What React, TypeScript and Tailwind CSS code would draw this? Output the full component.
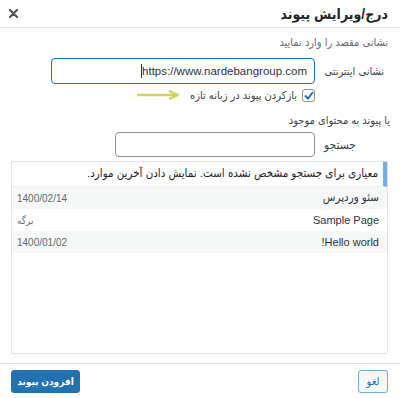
import React from 'react';

const font = "font-['Liberation_Sans','DejaVu_Sans_Condensed','DejaVu_Sans',sans-serif]";

const rows = [
  { title: 'سئو وردپرس', meta: '1400/02/14', latin: false, alt: true },
  { title: 'Sample Page', meta: 'برگه', latin: true, alt: false },
  { title: 'Hello world!', meta: '1400/01/02', latin: true, alt: true },
];

const CloseIcon = () => (
  <svg width="9" height="9" viewBox="0 0 9 9" className="block">
    <path d="M1 1 L8 8 M8 1 L1 8" stroke="#50575e" strokeWidth="2.2" strokeLinecap="round" />
  </svg>
);

const Arrow = () => (
  <svg width="44" height="10" viewBox="0 0 44 10" className="block">
    <path d="M1 5 H40" stroke="#c9d65a" strokeWidth="2.4" />
    <path d="M33 1 L42 5 L33 9" fill="none" stroke="#c9d65a" strokeWidth="2.4" strokeLinejoin="round" />
  </svg>
);

export default function App() {
  return (
    <div dir="rtl" className={`w-[400px] h-[398px] bg-white flex flex-col text-[#1d2327] whitespace-nowrap ${font}`}>
      {/* header */}
      <div className="h-[28px] flex items-center justify-between pr-[12px] pl-[9px] border-b border-[#e5e5e5]">
        <h1 className="text-[14px] font-bold leading-none">درج/ویرایش پیوند</h1>
        <CloseIcon />
      </div>

      {/* body */}
      <div className="flex-1 flex flex-col pr-[12px] pl-[11px]">
        <p className="mt-[5px] text-[11px] leading-[18px] text-[#646970]">نشانی مقصد را وارد نمایید</p>

        <div className="mt-[7px] flex items-center">
          <label className="w-[66px] shrink-0 pr-[4px] text-[11px] text-[#3c434a]">نشانی اینترنتی</label>
          <div className="mr-[7px] w-[264px] h-[26px] rounded-[4px] border-[1.5px] border-[#2271b1] flex items-center justify-start px-[7px]">
            <span dir="ltr" className="text-[11.5px] text-[#2c3338] leading-[14px] border-l border-[#2c3338]">https://www.nardebangroup.com</span>
          </div>
        </div>

        <div className="mt-[4px] h-[14px] flex items-center pr-[73px]">
          <span className="w-[13px] h-[13px] rounded-[3px] border border-[#8c8f94] flex items-center justify-center">
            <svg width="10" height="9" viewBox="0 0 10 9">
              <path d="M1 4.5 L4 7.5 L9 1" fill="none" stroke="#2271b1" strokeWidth="2" />
            </svg>
          </span>
          <span className="mr-[5px] text-[11px] text-[#3c434a]">بازکردن پیوند در زبانه تازه</span>
          <span className="mr-[10px]">
            <Arrow />
          </span>
        </div>

        <p className="mt-[9px] -mr-[2px] text-[11px] leading-[18px] text-[#3c434a]">یا پیوند به محتوای موجود</p>

        <div className="mt-[3px] flex items-center">
          <label className="w-[66px] shrink-0 pr-[32px] text-[12px] text-[#3c434a]">جستجو</label>
          <div className="mr-[7px] w-[200px] h-[25px] rounded-[4px] border border-[#8c8f94]" />
        </div>

        <div className="mt-[4px] h-[193px] border border-[#e5e5e5] flex flex-col">
          <div className="h-[25px] shrink-0 flex items-center pr-[5px] border-r-[4px] border-[#72aee6] border-b border-b-[#f0f0f1]">
            <span className="text-[11.5px] text-[#1d2327]">معیاری برای جستجو مشخص نشده است. نمایش دادن آخرین موارد.</span>
          </div>
          {rows.map((r) => (
            <div
              key={r.title}
              className={`h-[22px] shrink-0 flex items-center justify-between pr-[8px] pl-[5px] ${r.alt ? 'bg-[#f6f7f7]' : 'bg-white'}`}
            >
              <span dir={r.latin ? 'rtl' : undefined} className={`${r.latin ? 'text-[11px]' : 'text-[11.5px]'} text-[#2c3338]`}>
                {r.title}
              </span>
              <span className="text-[10px] text-[#646970]">{r.meta}</span>
            </div>
          ))}
        </div>
      </div>

      {/* footer */}
      <div className="h-[35px] border-t border-[#dcdcde] flex items-center justify-between pr-[12px] pl-[11px]">
        <button className="h-[23px] w-[30px] rounded-[3px] border border-[#72aee6] bg-[#f6f7f7] text-[11px] text-[#2271b1]">لغو</button>
        <button className="h-[23px] w-[69px] rounded-[3px] bg-[#2271b1] border border-[#2271b1] text-[10px] font-bold text-white">افزودن پیوند</button>
      </div>
    </div>
  );
}
